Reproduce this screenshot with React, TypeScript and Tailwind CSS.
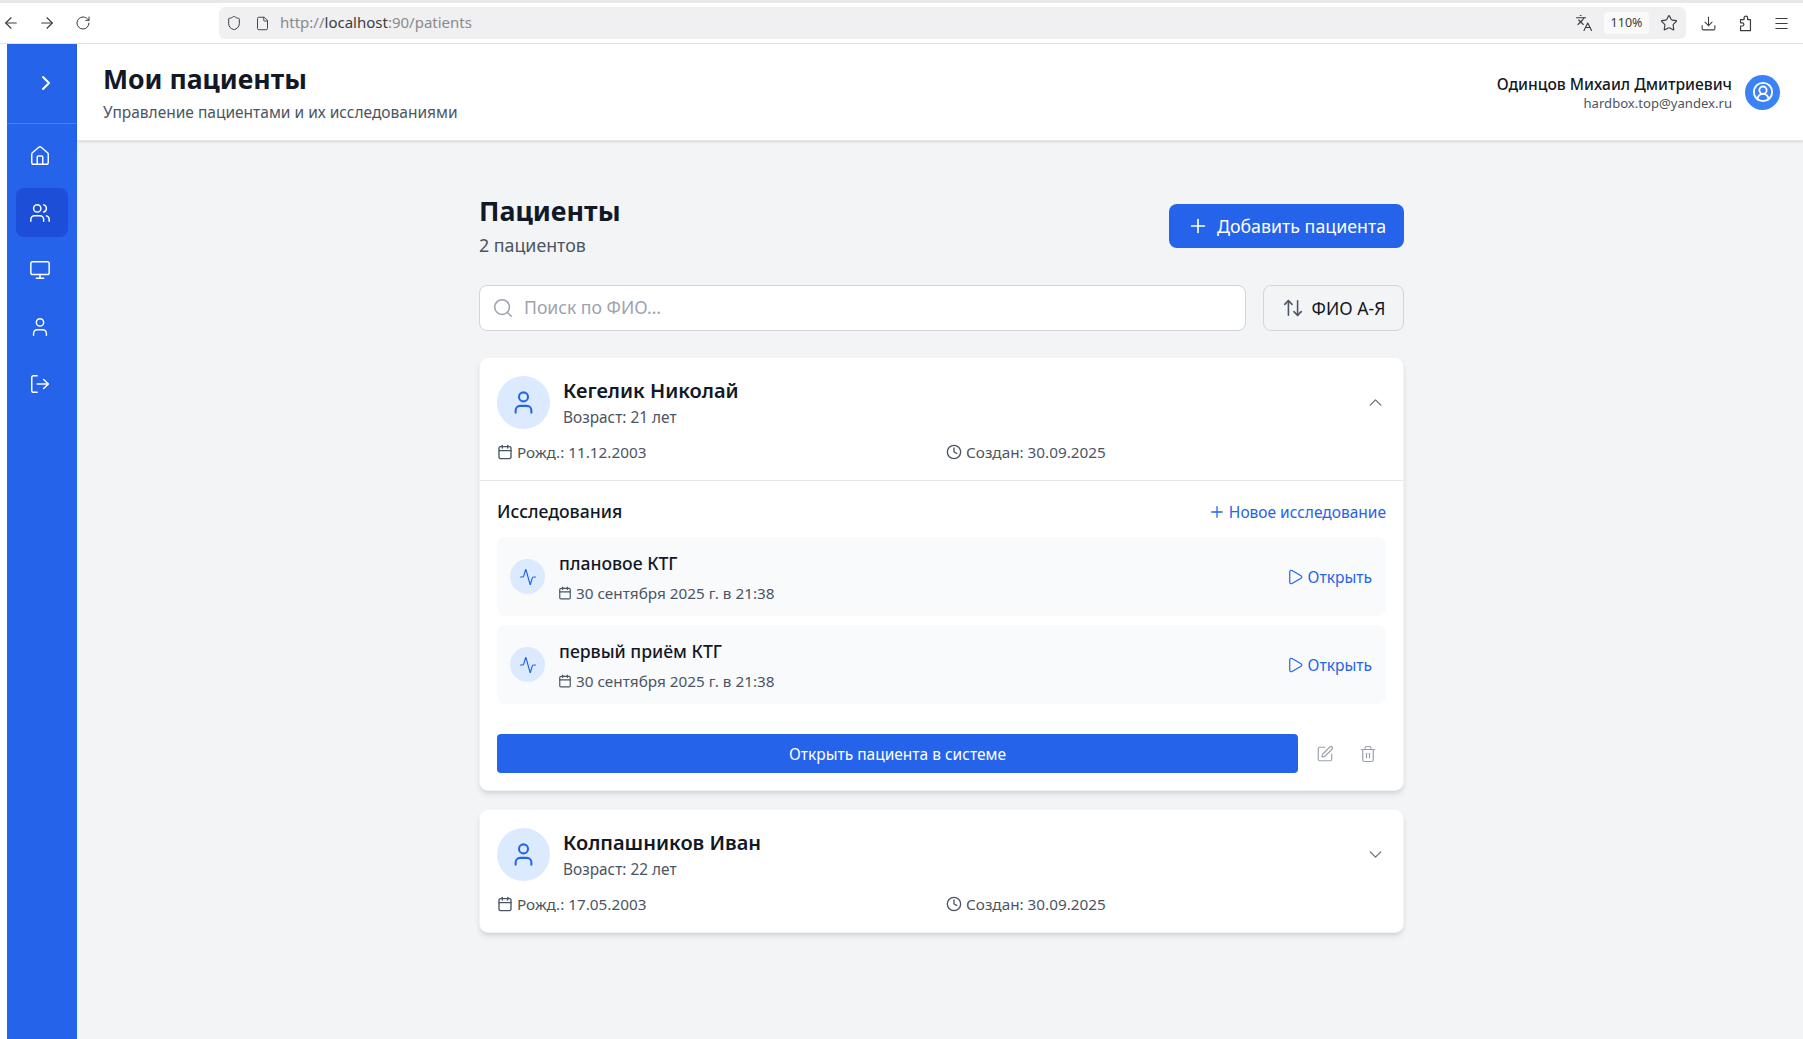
import {
  Activity,
  ArrowLeft,
  ArrowRight,
  ArrowUpDown,
  Calendar,
  ChevronDown,
  ChevronRight,
  ChevronUp,
  CircleUserRound,
  Clock,
  Download,
  File,
  House,
  Languages,
  LogOut,
  Menu,
  Monitor,
  Play,
  Plus,
  RotateCw,
  Search,
  Shield,
  SquarePen,
  Star,
  Trash2,
  User,
  Users,
} from 'lucide-react';

const BrowserBar = () => (
  <div className="h-[44px] shrink-0 border-t-[3px] border-b border-t-[#e8e8e8] border-b-[#e4e4e4] bg-white flex items-center text-[#3c3c3c]">
    <ArrowLeft size={18} strokeWidth={1.5} className="ml-[2px]" />
    <ArrowRight size={18} strokeWidth={1.5} className="ml-[18px]" />
    <RotateCw size={16} strokeWidth={1.5} className="ml-[19px]" />
    <div className="ml-[128px] w-[1467px] h-[32px] rounded-md bg-[#f0f0f2] flex items-center pl-[7px] pr-[8px]">
      <Shield size={16} strokeWidth={1.5} />
      <File size={15} strokeWidth={1.5} className="ml-[13px]" />
      <span className="ml-[10px] -mt-[1px] text-[15px] text-[#8a8a8a]">
        http://<span className="text-[#3c3c3c]">localhost</span>:90/patients
      </span>
      <Languages size={18} strokeWidth={1.5} className="ml-auto" />
      <span className="ml-[11px] h-[22px] w-[45px] rounded bg-[#fafafa] text-[12.5px] flex items-center justify-center">110%</span>
      <Star size={18} strokeWidth={1.5} className="ml-[11px]" />
    </div>
    <Download size={17} strokeWidth={1.5} className="ml-[14px]" />
    <svg width="17" height="17" viewBox="0 0 24 24" fill="none" stroke="currentColor" strokeWidth="1.7" strokeLinejoin="round" className="ml-[20px]">
      <path d="M5 22v-6.5h2.5a2.2 2.2 0 0 0 0-4.4H5V6.5h5V4.2a2.5 2.5 0 0 1 5 0v2.3h4V22z" />
    </svg>
    <Menu size={17} strokeWidth={1.5} className="ml-[19px]" />
  </div>
);

const Sidebar = () => (
  <aside className="ml-[7px] w-[70px] shrink-0 bg-[#2563eb] text-white flex flex-col">
    <div className="h-[80px] border-b border-[#4b80f0] flex items-center pl-[27px] pb-[2px]">
      <ChevronRight size={24} strokeWidth={2} />
    </div>
    <nav className="flex flex-col gap-[8px] pt-[7px] px-[9px]">
      {[House, Users, Monitor, User, LogOut].map((Icon, i) => (
        <div
          key={i}
          className={`h-[49px] w-[52px] rounded-lg flex items-center pl-[13px] ${i === 1 ? 'bg-[#1d4ed8]' : ''}`}
        >
          <Icon size={22} strokeWidth={1.6} />
        </div>
      ))}
    </nav>
  </aside>
);

const StudyRow = ({ title }: { title: string }) => (
  <div className="h-[79px] rounded-lg bg-[#f9fafb] flex items-center pl-[13px] pr-[14px]">
    <div className="w-[35px] h-[35px] rounded-full bg-[#dbeafe] flex items-center justify-center text-[#2563eb]">
      <Activity size={18} strokeWidth={1.6} />
    </div>
    <div className="ml-[14px] pt-[1px]">
      <div className="text-[17.6px] leading-[24px] font-medium text-[#111827]">{title}</div>
      <div className="mt-[7px] flex items-center text-[15.3px] leading-[22px] text-[#4b5563]">
        <Calendar size={14} className="mr-[4px] -ml-px" />
        30 сентября 2025 г. в 21:38
      </div>
    </div>
    <div className="ml-auto mt-[2px] flex items-center text-[15.6px] text-[#2563eb]">
      <Play size={18} strokeWidth={1.6} className="mr-[4px]" />
      Открыть
    </div>
  </div>
);

const PatientHead = ({
  name,
  age,
  birth,
  open,
}: {
  name: string;
  age: string;
  birth: string;
  open: boolean;
}) => (
  <div className="px-[17px] pt-[17px] pb-[17px]">
    <div className="flex items-center h-[54px]">
      <div className="w-[53px] h-[53px] rounded-full bg-[#dbeafe] flex items-center justify-center text-[#2563eb]">
        <User size={27} strokeWidth={1.8} className="-ml-px" />
      </div>
      <div className="ml-[13px] pt-[2px]">
        <div className="text-[20px] leading-[28px] font-semibold text-[#111827]">{name}</div>
        <div className="mt-[2px] text-[15.4px] leading-[22px] text-[#4b5563]">Возраст: {age}</div>
      </div>
      {open ? (
        <ChevronUp size={21} strokeWidth={1.6} className="ml-auto text-[#6b7280]" />
      ) : (
        <ChevronDown size={21} strokeWidth={1.6} className="ml-auto text-[#6b7280]" />
      )}
    </div>
    <div className="mt-[12px] grid grid-cols-2 gap-[9px] text-[15.3px] leading-[22px] text-[#4b5563]">
      <div className="flex items-center">
        <Calendar size={16} className="mr-[4px] -mt-[1px]" />
        Рожд.: {birth}
      </div>
      <div className="flex items-center">
        <Clock size={16} className="mr-[4px] -mt-[1px]" />
        Создан: 30.09.2025
      </div>
    </div>
  </div>
);

export default function App() {
  return (
    <div className="h-screen flex flex-col overflow-hidden bg-white font-['Noto_Sans',sans-serif]">
      <BrowserBar />
      <div className="flex-1 flex min-h-0">
        <Sidebar />
        <div className="flex-1 flex flex-col min-w-0 bg-[#f3f4f6]">
          <header className="h-[97px] shrink-0 bg-white shadow-sm border-b border-[#e5e7eb] flex items-center justify-between pl-[26px] pr-[23px]">
            <div>
              <h1 className="text-[26.6px] leading-[36px] font-bold text-[#111827]">Мои пациенты</h1>
              <p className="mt-[4px] text-[15.5px] leading-[22px] text-[#4b5563]">Управление пациентами и их исследованиями</p>
            </div>
            <div className="flex items-center">
              <div className="text-right pt-[1px]">
                <div className="text-[15.6px] leading-[20px] font-medium text-[#111827]">Одинцов Михаил Дмитриевич</div>
                <div className="text-[13.1px] leading-[18px] text-[#4b5563]">hardbox.top@yandex.ru</div>
              </div>
              <div className="ml-[13px] w-[35px] h-[35px] rounded-full bg-[#3b82f6] flex items-center justify-center text-white">
                <CircleUserRound size={22} strokeWidth={2} />
              </div>
            </div>
          </header>

          <main className="flex-1 pt-[52px] pl-[402px]">
            <div className="w-[925px]">
              <div className="flex items-start justify-between h-[55px]">
                <div>
                  <h2 className="text-[26.8px] leading-[36px] font-bold text-[#111827]">Пациенты</h2>
                  <p className="mt-[4px] text-[17.8px] leading-[24px] text-[#4b5563]">2 пациентов</p>
                </div>
                <button className="mt-[11px] h-[44px] w-[235px] rounded-lg bg-[#2563eb] text-white text-[17.8px] flex items-center justify-center">
                  <Plus size={22} strokeWidth={1.8} className="mr-[8px]" />
                  Добавить пациента
                </button>
              </div>

              <div className="mt-[37px] flex gap-[17px]">
                <div className="flex-1 h-[46px] rounded-lg border border-[#d1d5db] bg-white flex items-center pl-[12px]">
                  <Search size={22} strokeWidth={1.7} className="text-[#9ca3af]" />
                  <span className="ml-[10px] -mt-[2px] text-[17.6px] text-[#9ca3af]">Поиск по ФИО...</span>
                </div>
                <button className="w-[141px] h-[46px] rounded-lg border border-[#d1d5db] flex items-center justify-center text-[17.6px] text-[#111827]">
                  <ArrowUpDown size={22} strokeWidth={1.7} className="mr-[8px] text-[#4b5563]" />
                  ФИО А-Я
                </button>
              </div>

              <section className="mt-[26px] rounded-[9px] bg-white shadow-md border border-[#f3f4f6]">
                <PatientHead name="Кегелик Николай" age="21 лет" birth="11.12.2003" open />
                <div className="border-t border-[#e5e7eb] px-[17px] pt-[19px] pb-[17px]">
                  <div className="flex items-center justify-between h-[22px]">
                    <span className="text-[17.6px] font-medium text-[#111827]">Исследования</span>
                    <span className="mt-[4px] flex items-center text-[15.5px] text-[#2563eb]">
                      <Plus size={18} strokeWidth={1.7} className="mr-[3px] -mt-[2px]" />
                      Новое исследование
                    </span>
                  </div>
                  <div className="mt-[15px] flex flex-col gap-[9px]">
                    <StudyRow title="плановое КТГ" />
                    <StudyRow title="первый приём КТГ" />
                  </div>
                  <div className="mt-[30px] flex items-center">
                    <button className="w-[801px] h-[39px] rounded bg-[#2563eb] text-white text-[15.5px] flex items-center justify-center pt-[2px]">
                      Открыть пациента в системе
                    </button>
                    <SquarePen size={18} strokeWidth={1.6} className="ml-[18px] text-[#9ca3af]" />
                    <Trash2 size={18} strokeWidth={1.6} className="ml-[25px] text-[#9ca3af]" />
                  </div>
                </div>
              </section>

              <section className="mt-[18px] rounded-[9px] bg-white shadow-md border border-[#f3f4f6]">
                <PatientHead name="Колпашников Иван" age="22 лет" birth="17.05.2003" open={false} />
              </section>
            </div>
          </main>
        </div>
      </div>
    </div>
  );
}
